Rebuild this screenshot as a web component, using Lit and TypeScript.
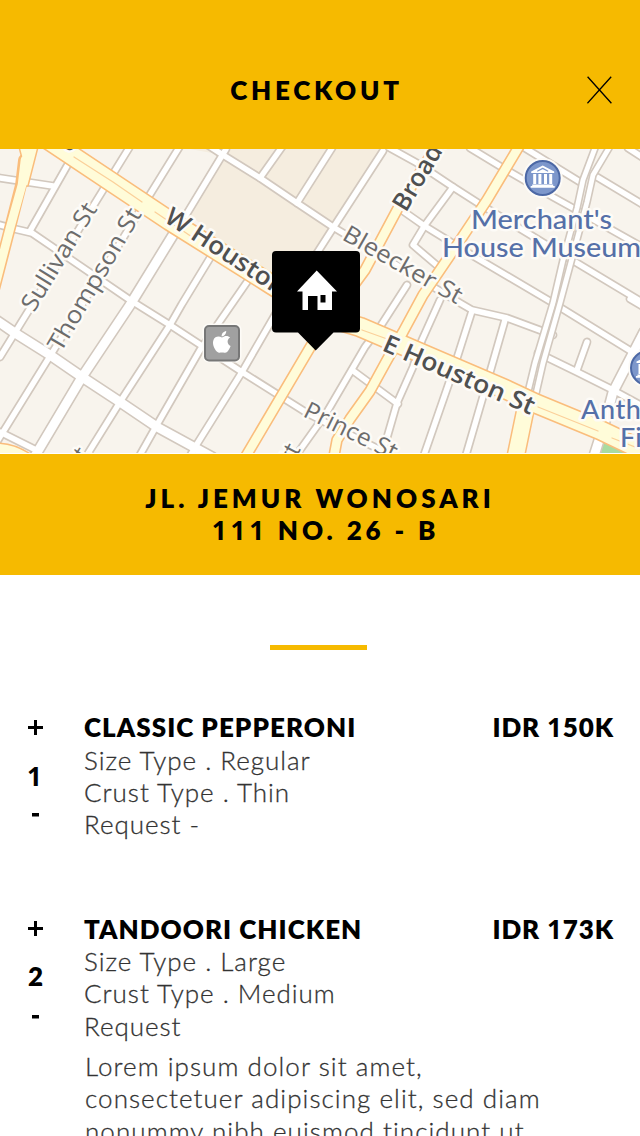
import { LitElement, html, svg, css } from "lit";
import { customElement, property } from "lit/decorators.js";

interface OrderItem {
  name: string;
  price: [string, string, string];
  qty: number;
  size: string;
  crust: string;
  request: string;
  note: string[];
}

const ITEMS: OrderItem[] = [
  { name: "CLASSIC PEPPERONI", price: ["IDR ", "1", "50K"], qty: 1, size: "Regular", crust: "Thin", request: "Request -", note: [] },
  {
    name: "TANDOORI CHICKEN", price: ["IDR ", "1", "73K"], qty: 2, size: "Large", crust: "Medium", request: "Request",
    note: ["Lorem ipsum dolor sit amet,", "consectetuer adipiscing elit, sed diam", "nonummy nibh euismod tincidunt ut"],
  },
];

/* Side streets, drawn narrow */
const STREETS = [
  "M0 178L53 186",
  "M67 166L30 231",
  "M129 148L0 357",
  "M180 146L-5 445",
  "M226 149L180 225",
  "M0 225L15 229L32 233L130 300L170 325L242 372L307 413L390 455",
  "M210 258L182 304L170 325L120 402L87 455",
  "M247 282L200 350L158 423L140 455",
  "M283 301L242 372L197 444L190 456",
  "M383 151L335 225L310 264",
  "M332 148L297 203",
  "M282 147L260 178",
  "M200 140L223 155L260 178L297 203L333 227L460 303L472 310L507 318L553 335",
  "M388 147L417 163L453 187L478 203L547 245L642 302",
  "M470 148L503 168L553 197L580 212L642 247",
  "M520 145L580 182",
  "M597 177L642 204",
  "M628 148L642 157",
  "M403 211L423 225L475 257L553 303L642 358",
  "M453 187L425 225L413 245L440 268",
  "M407 285L380 327L365 347L327 412L300 450",
  "M352 370L398 404",
  "M440 300L422 340L413 367L397 403L382 455",
  "M472 311L450 380L424 455",
  "M505 320L482 400L466 455",
  "M587 342L577 370",
  "M538 353L577 372L613 390L642 406",
  "M630 299L642 306",
  "M0 432L36 450",
];

const WIDE = [
  "M173 235L130 305L82 377L35 456",
  "M-4 320L15 333L50 355L82 377L120 402L157 427L212 457",
  "M644 332L613 392L607 415L594 456",
];

/* The twin carriageways of the Bowery */
const TWIN = [
  "M595 148L583 180L577 208L563 260L553 303L535 363L527 396",
  "M609 148L593 175L587 202L571 262L560 303L543 363L535 398",
];

const AVENUES = [
  "M435 148L397 210L365 270L318 334L246 456",
  "M521 143L487 200L457 245L423 295L403 332L387 360L370 391L350 419L337 440L334 456",
];

const HOUSTON = "M50 141L113 183L170 221L272 285L320 315L360 327L423 354L507 390L537 404L600 430L650 454";

const roads = (paths: string[], kind: string) => paths.map((d) => svg`<path class=${kind} d=${d}></path>`);

@customElement("street-map")
export class StreetMap extends LitElement {
  static styles = css`
    :host { display: block; height: 304px; }
    .map { display: block; width: 100%; height: 100%; background: #f8f4ed; }
    path { fill: none; stroke-linecap: round; stroke-linejoin: round; }
    .street-edge { stroke: #d2c8be; stroke-width: 8.8; }
    .street { stroke: #fff; stroke-width: 5.4; }
    .wide-edge { stroke: #d2c8be; stroke-width: 12; }
    .wide { stroke: #fff; stroke-width: 8.8; }
    .twin-edge { stroke: #d2c8be; stroke-width: 8; }
    .twin { stroke: #fff; stroke-width: 4.8; }
    .ave-edge { stroke: #fabd7c; stroke-width: 11.8; }
    .ave { stroke: #fffcd9; stroke-width: 8.6; }
    .bowery-edge { stroke: #fabd7c; stroke-width: 19; stroke-linecap: butt; }
    .bowery { stroke: #fffcd9; stroke-width: 16; }
    .main-edge { stroke: #fabd7c; stroke-width: 21; }
    .main { stroke: #fffcd9; stroke-width: 17.8; }
    .main-line { stroke: #fbd09a; stroke-width: 1.3; }
    .edged { fill: #fffcd9; stroke: #fabd7c; stroke-width: 1.5; }
    .park { fill: #f5eddf; }
    .green { fill: #a9dba0; }
    text { font-family: "Open Sans", "Noto Sans", sans-serif; paint-order: stroke; stroke: #fdfbf7; stroke-width: 5px; stroke-linejoin: round; }
    .minor { font-size: 24px; font-weight: 400; fill: #6c6c6c; }
    .major { font-size: 25px; font-weight: 600; fill: #4f5050; }
    .place { font-family: Lato, sans-serif; font-size: 27px; font-weight: 500; fill: #5570a8; }
    .badge { fill: #7d97cb; stroke: #4c68a5; stroke-width: 2; }
    .badge-line { stroke: #7d97cb; stroke-width: 1.2; }
    .badge-halo { fill: #fdfbf7; }
    .white { fill: #fff; }
    .store { fill: #a0a0a0; stroke: #777; stroke-width: 2; }
    .pin { fill: #000; }
  `;

  private museum(x: number, y: number) {
    return svg`<g transform="translate(${x} ${y})">
      <circle class="badge-halo" r="20"></circle>
      <circle class="badge" r="17"></circle>
      <path class="white" d="M0 -12.500L11.500 -6.500V-5H-11.500V-6.500Z"></path>
      <path class="white" d="M-9.500 -4H-6.500V6H-9.500ZM-4.300 -4H-1.300V6H-4.300ZM1.300 -4H4.300V6H1.300ZM6.500 -4H9.500V6H6.500Z"></path>
      <path class="white" d="M-10.500 6.500H10.500V8H12V9.700H-12V8H-10.500Z"></path>
      <path class="badge-line" d="M-5 -7L0 -9.600L5 -7"></path>
    </g>`;
  }

  render() {
    return html`<svg class="map" viewBox="0 149 640 304" preserveAspectRatio="none">
      <path class="park" d="M190 149H383L335 225L310 264V320L187 212L223 155Z"></path>
      <path class="green" d="M603 440L634 456H598Z"></path>
      ${roads(STREETS, "street-edge")}${roads(WIDE, "wide-edge")}
      ${roads(STREETS, "street")}${roads(WIDE, "wide")}
      ${TWIN.map((d) => svg`<path class="twin-edge" d=${d}></path><path class="twin" d=${d}></path>`)}
      ${roads(AVENUES, "ave-edge")}
      <path class="ave-edge" d="M24 160L21 185L10 228L-6 290"></path>
      <path class="edged" d="M19 147L23 162L20 186H28L38 147Z"></path>
      <path class="bowery-edge" d="M527 402L515 460"></path>
      <path class="main-edge" d=${HOUSTON}></path>
      ${roads(AVENUES, "ave")}
      <path class="ave" d="M25 160L22 185L10 228L-6 290"></path>
      <path class="bowery" d="M527 402L515 460"></path>
      <path class="main" d=${HOUSTON}></path>
      <path class="main-line" d="M74 157L113 182L142 202M155 212L195 239M362 330L390 340M538 407L598 431M612 438L640 449"></path>
      <path class="edged" d="M-4 443Q16 443 33 456H-4Z"></path>

      <text class="minor" transform="translate(34 313) rotate(-58.500)" textLength="122" lengthAdjust="spacingAndGlyphs">Sullivan St</text>
      <text class="minor" transform="translate(61 353) rotate(-59.700)" textLength="161" lengthAdjust="spacingAndGlyphs">Thompson St</text>
      <text class="major" transform="translate(163 221) rotate(33)" textLength="139" lengthAdjust="spacingAndGlyphs">W Houston</text>
      <text class="major" transform="translate(381 350) rotate(23.500)" textLength="163" lengthAdjust="spacingAndGlyphs">E Houston St</text>
      <text class="minor" transform="translate(341 239) rotate(29.500)" textLength="133" lengthAdjust="spacingAndGlyphs">Bleecker St</text>
      <text class="minor" transform="translate(302 416) rotate(26)" textLength="101" lengthAdjust="spacingAndGlyphs">Prince St</text>
      <text class="major" transform="translate(406 213) rotate(-59)">Broadway</text>
      <text class="minor" transform="translate(86 461) rotate(-58)">t</text>
      <text class="minor" transform="translate(293 464) rotate(-62)">tt</text>
      <text class="major" transform="translate(68 143) rotate(33)">y</text>

      ${this.museum(542.7, 178)}
      ${this.museum(648, 368)}
      <text class="place" x="471" y="229" textLength="141" lengthAdjust="spacingAndGlyphs">Merchant's</text>
      <text class="place" x="442" y="257" textLength="199" lengthAdjust="spacingAndGlyphs">House Museum</text>
      <text class="place" x="581" y="419" letter-spacing="0.600">Anth</text>
      <text class="place" x="620" y="447">Fi</text>

      <rect class="badge-halo" x="202.500" y="323.500" width="39" height="39" rx="6"></rect>
      <rect class="store" x="205" y="326" width="34" height="34.500" rx="4"></rect>
      <path class="white" d="M222 337.500c-2-1.300-4.500-1.600-6.500-.2c-3.600 2.600-2.800 8.200-.6 11.800c1.300 2.200 2.800 4 4.600 3.600c1.500-.4 3.300-.4 4.900 0c1.900.5 3.700-1.500 4.700-3.400c.7-1.200 1.200-2.400 1.500-3.300c-3.700-1.700-4-6.500-.5-8.400c-1.600-2.100-5.200-2.400-8.100-.1ZM221.600 336.400c-.1-2.700 1.900-5 4.600-5.400c.2 2.700-1.900 5.300-4.600 5.400Z"></path>

      <path class="pin" d="M276 251H356A4 4 0 0 1 360 255V328.500A4 4 0 0 1 356 332.500H333.500L315.700 350.500L298 332.500H276A4 4 0 0 1 272 328.500V255A4 4 0 0 1 276 251Z"></path>
      <path class="white" d="M316.700 270.500L337 291.500H332V310H317.500V296H308V310H302.500V291.500H297Z"></path>
      <path class="pin" d="M320.500 295H325.500V302.500H320.500Z"></path>
    </svg>`;
  }
}

@customElement("order-item")
export class OrderItemRow extends LitElement {
  @property({ attribute: false }) item!: OrderItem;

  static styles = css`
    :host { display: grid; grid-template-columns: 57px minmax(0, 1fr) auto; padding: 0 27px; font-size: 26px; line-height: 32.3px; }
    .qty { display: flex; flex-direction: column; align-items: flex-start; font-weight: 800; color: #000; }
    .step { display: flex; align-items: center; justify-content: center; width: 17px; height: 32px; }
    .count { width: 17px; height: 32px; margin: 15px 0 9px; line-height: 32px; text-align: center; }
    .num { font-family: "Open Sans", sans-serif; font-weight: 700; line-height: 1; }
    .count.one { line-height: 36px; text-indent: -2px; }
    .body { display: flex; flex-direction: column; white-space: nowrap; color: #333; font-weight: 300; letter-spacing: 0.98px; -webkit-text-stroke: 0.3px #333; }
    .name { font-weight: 800; color: #000; letter-spacing: 1.03px; -webkit-text-stroke: 0; }
    .note { display: flex; flex-direction: column; padding: 8px 0 0 1px; letter-spacing: 1.06px; }
    .price { font-weight: 800; color: #000; letter-spacing: 0.9px; white-space: nowrap; margin: 0 -1px 0 0; }
  `;

  render() {
    const { name, price, qty, size, crust, request, note } = this.item;
    return html`
      <div class="qty">
        <span class="step"><svg width="15" height="15" viewBox="0 0 15 15"><path d="M6 0H9V6H15V9H9V15H6V9H0V6H6Z"></path></svg></span>
        <span class="count ${qty === 1 ? "num one" : ""}">${qty}</span>
        <span class="step"><svg width="7" height="4" viewBox="0 0 7 4"><path d="M0 0H7V3.500H0Z"></path></svg></span>
      </div>
      <div class="body">
        <span class="name">${name}</span>
        <span>Size Type . ${size}</span>
        <span>Crust Type . ${crust}</span>
        <span>${request}</span>
        ${note.length ? html`<div class="note">${note.map((line) => html`<span>${line}</span>`)}</div>` : null}
      </div>
      <div class="price">${price[0]}<span class="num">${price[1]}</span>${price[2]}</div>
    `;
  }
}

@customElement("app-root")
export class AppRoot extends LitElement {
  static styles = css`
    :host { display: flex; flex-direction: column; height: 1136px; overflow: hidden; background: #fff; font-family: Lato, "Open Sans", sans-serif; color: #000; }
    header { flex: none; display: grid; grid-template-columns: 1fr auto 1fr; align-items: center; height: 119px; padding: 30px 28px 0; background: #f6ba00; }
    h1 { grid-column: 2; margin: 0 7px 0 0; font-size: 26px; line-height: 32px; font-weight: 800; letter-spacing: 3.7px; }
    .close { justify-self: end; display: block; }
    street-map { flex: none; }
    .address { flex: none; margin-top: 1px; height: 121px; display: flex; flex-direction: column; align-items: center; box-sizing: border-box; padding-top: 27.5px; background: #f6ba00; font-size: 26px; line-height: 32.3px; font-weight: 800; white-space: nowrap; }
    .line1 { letter-spacing: 4px; }
    .line2 { letter-spacing: 3.9px; padding-left: 11px; }
    .num { font-family: "Open Sans", sans-serif; font-weight: 700; line-height: 1; }
    .rule { flex: none; width: 97px; height: 5px; margin: 70px 3px 0 0; align-self: center; background: #f6ba00; }
    .items { display: flex; flex-direction: column; gap: 72.3px; padding-top: 61.3px; }
  `;

  render() {
    return html`
      <header>
        <h1>CHECKOUT</h1>
        <svg class="close" width="25" height="28" viewBox="0 0 25 28"><path d="M.6.8L24.400 27.200M24.200.8L.4 27.200" stroke="#000" stroke-width="1.300" fill="none"></path></svg>
      </header>
      <street-map></street-map>
      <div class="address">
        <span class="line1">JL. JEMUR WONOSARI</span>
        <span class="line2"><span class="num">111</span> NO. 26 - B</span>
      </div>
      <div class="rule"></div>
      <div class="items">${ITEMS.map((item) => html`<order-item .item=${item}></order-item>`)}</div>
    `;
  }
}
